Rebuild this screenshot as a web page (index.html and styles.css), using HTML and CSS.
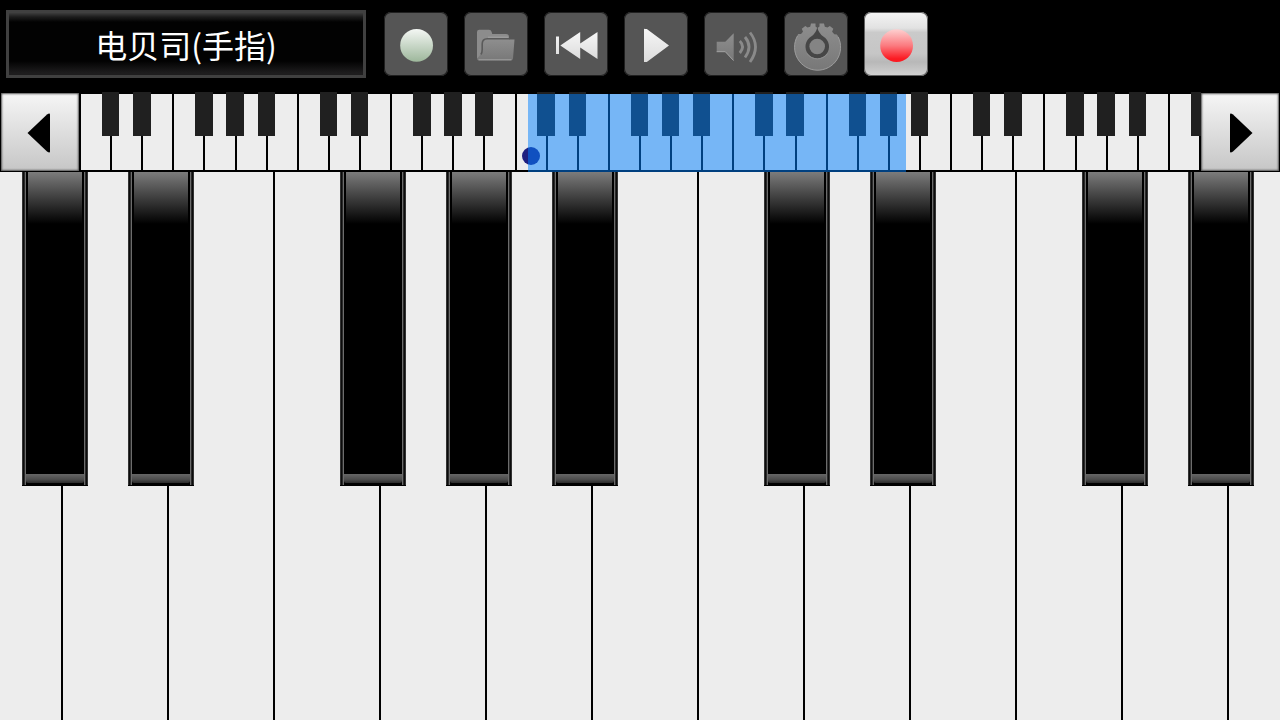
FILE: index.html
```html
<!DOCTYPE html>
<html lang="zh-CN">
<head>
    <meta charset="UTF-8">
    <meta name="viewport" content="width=device-width, initial-scale=1.0">
    <title>钢琴</title>
    <link rel="stylesheet" href="styles.css">
</head>
<body>
    <header class="toolbar">
        <button class="instrument" type="button">电贝司(手指)</button>

        <div class="tools">
            <button class="tool" type="button" aria-label="录音">
                <svg viewBox="0 0 64 64">
                    <defs>
                        <linearGradient id="pale" x1="0" y1="0" x2="0" y2="1">
                            <stop offset="0" stop-color="#f4f7f4"/>
                            <stop offset="1" stop-color="#9db79b"/>
                        </linearGradient>
                        <linearGradient id="red" x1="0" y1="0" x2="0" y2="1">
                            <stop offset="0" stop-color="#fdd0d0"/>
                            <stop offset="0.5" stop-color="#fb7a7f"/>
                            <stop offset="0.9" stop-color="#fb1a22"/>
                        </linearGradient>
                        <linearGradient id="silver" x1="0" y1="0" x2="0" y2="1">
                            <stop offset="0" stop-color="#f6f6f6"/>
                            <stop offset="1" stop-color="#dcdcdc"/>
                        </linearGradient>
                        <linearGradient id="grey" x1="0" y1="0" x2="0" y2="1">
                            <stop offset="0" stop-color="#8e8e8e"/>
                            <stop offset="1" stop-color="#787878"/>
                        </linearGradient>
                    </defs>
                    <circle cx="32.6" cy="33.4" r="16.4" fill="url(#pale)"/>
                </svg>
            </button>
            <button class="tool" type="button" aria-label="打开">
                <svg viewBox="0 0 64 64">
                    <path d="M13 46V20q0-2.300 2.300-2.300H25q2 0 2.700 2.300l.5 2H42q3 0 3 3v4H22q-3 0-3 4v8l-3 5z" fill="#8c8c8c"/>
                    <path d="M13 46.500l4.500-5L18.500 31q.4-3.500 4-3.500h28L49 46.500q-.3 2-2.400 2H15q-2 0-2-2z" fill="url(#grey)"/>
                    <path d="M16.800 42.500q1.400-1.500 1.400-5V32q0-5.300 5-5.300H45.500" fill="none" stroke="#5a5a5a" stroke-width="1.600"/>
                    <path d="M24 25.200h20M14.500 47.800h33" fill="none" stroke="#a2a2a2" stroke-width="1"/>
                </svg>
            </button>
            <button class="tool" type="button" aria-label="倒回">
                <svg viewBox="0 0 64 64">
                    <path d="M12 24.500h3v17.500h-3zM16.300 33.500L36.200 20v11.500L53.500 20v27L36.200 35.500V47z" fill="url(#silver)"/>
                </svg>
            </button>
            <button class="tool" type="button" aria-label="播放">
                <svg viewBox="0 0 64 64">
                    <path d="M20 17.500q0-1 1.300-.5h1.500L45 33.500 22.800 50H20z" fill="url(#silver)"/>
                </svg>
            </button>
            <button class="tool" type="button" aria-label="音量">
                <svg viewBox="0 0 64 64">
                    <path d="M12.700 29.700h8.600l8.400-8.400V49l-8.400-9h-8.600z" fill="url(#grey)"/>
                    <path d="M12.700 39.700h8.600l8.200 8.800" fill="none" stroke="#a0a0a0" stroke-width="1"/>
                    <path d="M35.800 29q5.500 5.500 0 12M41 25q8 9.500 0 20.500M46 20.500q11 14 0 29.500" fill="none" stroke="#8a8a8a" stroke-width="2.800"/>
                </svg>
            </button>
            <button class="tool" type="button" aria-label="设置">
                <svg viewBox="0 0 64 64">
                    <path d="M33.500 16L31.500 14.500V11.600H27l-.8 3.200-2.700.8-2.200-1.600-3.500 2.700 1.200 3-2 2.300-2.800.1-1.300 2.400A23.200 23.200 0 1 0 54.500 25l-1.600-2.500-2.600-.2-2.200-2.500 1.200-3-3.500-2.700-2.300 1.500-2.700-.8-.8-3.200h-4.500v2.900z" fill="url(#grey)"/>
                    <path d="M13.500 24A23 23 0 1 0 54.200 25" fill="none" stroke="#9c9c9c" stroke-width="1"/>
                    <path d="M33.300 15q1 6 6 9.500A11.800 11.800 0 1 1 27.200 24.500Q32.300 21 33.300 15z" fill="#464646"/>
                    <path d="M23 41.500A12.500 12.500 0 0 0 43.600 41.500" fill="none" stroke="#8f8f8f" stroke-width="1"/>
                    <circle cx="33.200" cy="34.500" r="7.800" fill="#848484"/>
                </svg>
            </button>
            <button class="tool tool-active" type="button" aria-label="停止录音">
                <svg viewBox="0 0 64 64">
                    <circle cx="32.600" cy="33.700" r="16.400" fill="url(#red)"/>
                </svg>
            </button>
        </div>
    </header>

    <nav class="navigator">
        <button class="arrow" type="button" aria-label="向左">
            <svg viewBox="0 0 78 78"><path d="M26.500 40L46 21.500q3-2 3 0v37q0 2-3 0z"/></svg>
        </button>
        <div class="overview" id="overview">
            <div class="range"></div>
        </div>
        <button class="arrow" type="button" aria-label="向右">
            <svg viewBox="0 0 78 78"><path d="M51.500 40L32 21.500q-3-2-3 0v37q0 2 3 0z"/></svg>
        </button>
    </nav>

    <main class="keyboard" id="keyboard"></main>

    <script src="script.js"></script>
</body>
</html>
```

FILE: styles.css
```css
* {
    box-sizing: border-box;
}

body {
    margin: 0;
    height: 100vh;
    display: flex;
    flex-direction: column;
    overflow: hidden;
    background: #000;
    font-family: "Noto Sans CJK SC", sans-serif;
}

button {
    margin: 0;
    padding: 0;
    border: none;
    cursor: pointer;
}

svg {
    display: block;
}

/* toolbar */
.toolbar {
    display: flex;
    align-items: center;
    gap: 18px;
    padding: 10px 6px 14px;
}

.instrument {
    width: 360px;
    height: 68px;
    border: 3px solid #404040;
    background: linear-gradient(#3c3c3c 0, #1c1c1c 4px, #020202 9px, #020202 48px, #1e1d1e 60px);
    color: #fff;
    font-family: inherit;
    font-size: 32px;
    line-height: 40px;
}

.tools {
    display: flex;
    gap: 16px;
}

.tool {
    width: 64px;
    height: 64px;
    border-radius: 7px;
    background: #555;
    box-shadow: inset 0 0 0 1px #202020;
}

.tool-active {
    background: linear-gradient(#f4f4f4, #e2e2e2 25%, #cacaca 32%, #c6c6c6 65%, #b8b8b8 78%, #d2d2d2);
    box-shadow: inset 0 0 0 1px #606060;
}

/* small keyboard with the visible range */
.navigator {
    display: flex;
    height: 80px;
}

.arrow {
    flex: 0 0 80px;
    border: 1px solid #000;
    background: linear-gradient(#f6f6f6, #c6c6c6);
    box-shadow: inset 0 0 2px 1px #555;
}

.overview {
    flex: 1;
    display: flex;
    position: relative;
    overflow: hidden;
    margin-right: -1px;
    border-left: 1px solid #000;
    padding: 2px 0;
}

.note {
    flex: 1 1 0;
    position: relative;
    background: #ededed;
    border-right: 2px solid #000;
}

.note-sharp::after {
    content: "";
    position: absolute;
    z-index: 1;
    top: -2px;
    left: 72%;
    width: 60%;
    height: 44px;
    background: #202020;
}

.note-middle::before {
    content: "";
    position: absolute;
    left: 50%;
    bottom: 5px;
    width: 18px;
    height: 18px;
    margin-left: -9px;
    border-radius: 50%;
    background: #202080;
}

.range {
    position: absolute;
    z-index: 2;
    top: 2px;
    bottom: 0;
    left: calc(40% - 1px);
    width: 33.75%;
    background: rgba(0, 128, 255, 0.5);
}

/* playing keyboard */
.keyboard {
    --unit: calc(100vw / 1280);
    flex: 1;
    display: flex;
    overflow: hidden;
}

.key {
    flex: 0 0 calc(var(--unit) * 106);
    position: relative;
}

.key:first-child {
    margin-left: calc(var(--unit) * -43);
}

.white {
    display: block;
    width: 100%;
    height: 100%;
    background: #ededed;
    border-right: 2px solid #000;
}

.black {
    position: absolute;
    z-index: 1;
    top: 0;
    left: calc(var(--unit) * 65);
    width: calc(var(--unit) * 66);
    height: calc(100% * 314 / 548);
    padding: 0 4px 2px;
    display: flex;
    flex-direction: column;
    justify-content: space-between;
    border-bottom: 1px solid #000;
    background: linear-gradient(90deg, #333 0, #333 1px, #0c0c0c 1px, #0c0c0c 2px, #2a2a2a 2px, #2a2a2a 3px, #6c6c6c 3px, #6c6c6c 4px, #000 4px, #000 calc(100% - 4px), #6c6c6c calc(100% - 4px), #6c6c6c calc(100% - 3px), #2a2a2a calc(100% - 3px), #2a2a2a calc(100% - 2px), #0c0c0c calc(100% - 2px), #0c0c0c calc(100% - 1px), #333 calc(100% - 1px));
}

.shine {
    height: 52px;
    margin: 0 2px;
    background: linear-gradient(#7c7c7c, #4a4a4a 40%, #000);
}

.lip {
    height: 9px;
    background: linear-gradient(#666, #4c4c4c 60%, #2c2c2c);
    border-radius: 0 0 2px 2px;
}
```

FILE: script.js
```javascript
const names = ['C', 'D', 'E', 'F', 'G', 'A', 'B'];
const sharps = ['C', 'D', 'F', 'G', 'A'];

// Overview: 36 white notes starting on C
const overview = document.getElementById('overview');
for (let i = 0; i < 36; i++) {
    const note = document.createElement('div');
    note.className = 'note';
    if (sharps.includes(names[i % 7])) note.classList.add('note-sharp');
    if (i === 14) note.classList.add('note-middle');
    overview.appendChild(note);
}

// Keyboard: the 13 white keys in view, the first and last cut by the edge
const keyboard = document.getElementById('keyboard');

function addButton(parent, className, label) {
    const button = document.createElement('button');
    button.type = 'button';
    button.className = className;
    button.setAttribute('aria-label', label);
    parent.appendChild(button);
    return button;
}

for (let i = 14; i < 27; i++) {
    const name = names[i % 7];
    const key = document.createElement('div');
    key.className = 'key';
    addButton(key, 'white', name);
    if (sharps.includes(name)) {
        const black = addButton(key, 'black', name + '#');
        black.innerHTML = '<span class="shine"></span><span class="lip"></span>';
    }
    keyboard.appendChild(key);
}
```
